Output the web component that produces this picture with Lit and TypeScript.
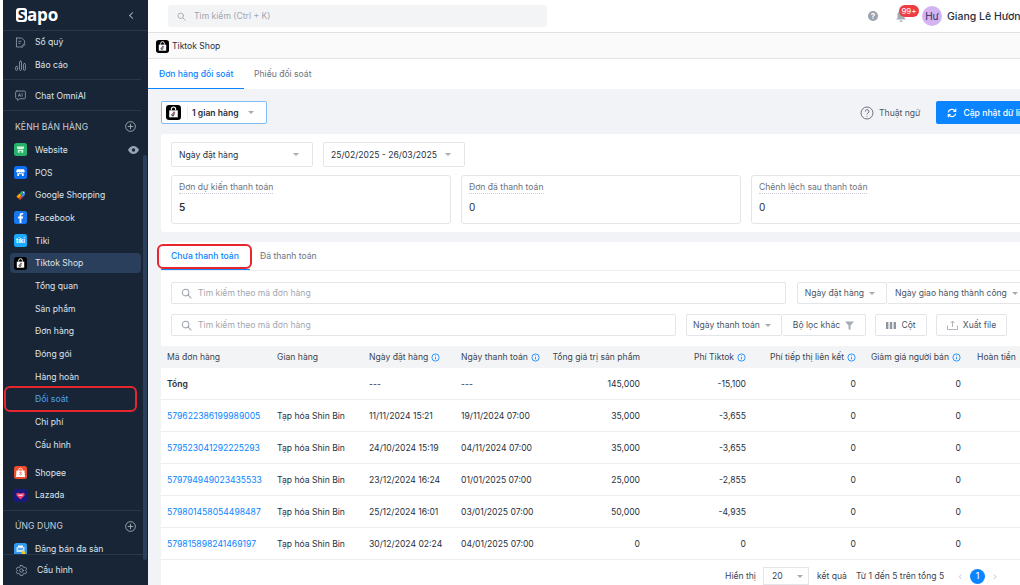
import { LitElement, html, css, svg } from 'lit';
import { customElement } from 'lit/decorators.js';

const bag = (s: number) => html`<svg width=${s} height=${s} viewBox="0 0 14 14">
  <rect width="14" height="14" rx="3" fill="#000"/>
  <path d="M3 5h8v6.500H3z" fill="#fff"/>
  <path d="M5 5V3.800a2 2 0 0 1 4 0V5" fill="none" stroke="#fff" stroke-width="1"/>
  <path d="M7.400 6.200v3a1 1 0 1 1-1-1" fill="none" stroke="#111" stroke-width=".9"/>
  <path d="M7.500 6.400c.2.600.6 1 1.200 1" fill="none" stroke="#e0184d" stroke-width=".6"/>
</svg>`;

const line = (d: any, size = 13) => html`<svg width=${size} height=${size} viewBox="0 0 16 16" fill="none" stroke="currentColor" stroke-width="1.100" stroke-linecap="round" stroke-linejoin="round">${d}</svg>`;

const tile = (bg: string, inner: any) => html`<svg width="13" height="13" viewBox="0 0 13 13"><rect width="13" height="13" rx="2.500" fill=${bg}/>${inner}</svg>`;

const icons: Record<string, any> = {
  fund: line(svg`<path d="M3 2.500h6.500L13 6v3M3 2.500v11h5"/><path d="M6 6.500h2.500M6 9h1.500"/><path d="M10 14l3.500-3.500-1-1L9 13z"/>`),
  chart: line(svg`<rect x="2" y="9" width="2.400" height="5" rx="1.200"/><rect x="6.800" y="2.500" width="2.400" height="11.500" rx="1.200"/><rect x="11.600" y="5.500" width="2.400" height="8.500" rx="1.200"/>`),
  chat: line(svg`<path d="M3.500 2.500h9a1.500 1.500 0 0 1 1.500 1.500v6.500a1.500 1.500 0 0 1-1.500 1.500H7l-2.500 2v-2h-1A1.500 1.500 0 0 1 2 10.500V4a1.500 1.500 0 0 1 1.500-1.500z"/><path d="M5.500 9l1.300-3.500L8 9M6 8h1.600M10 5.500V9" stroke-width=".9"/>`),
  gear: line(svg`<circle cx="8" cy="8" r="2.200"/><path d="M6.600 1.800h2.800l.4 1.700 1.500.9 1.700-.5 1.400 2.400-1.300 1.200v1l1.300 1.200-1.400 2.400-1.700-.5-1.500.9-.4 1.700H6.600l-.4-1.700-1.500-.9-1.700.5-1.400-2.400L2.900 8.500v-1L1.600 6.300 3 3.900l1.700.5 1.500-.9z"/>`),
  website: tile('#27b36a', svg`<path d="M3 3.500h7v1.800l-.6.800H3.600L3 5.300zM3.800 6.800h5.400v3H3.800z" fill="#d6f5e3"/><path d="M5.500 8h2v1.800h-2z" fill="#27b36a"/>`),
  pos: tile('#0b6ff2', svg`<path d="M3 3.200h7l.8 2.400a1.200 1.200 0 0 1-2.200.4 1.300 1.300 0 0 1-2.100 0 1.300 1.300 0 0 1-2.100 0 1.200 1.200 0 0 1-2.200-.4zM3.300 7.200h6.400V10H8V8.200H5V10H3.300z" fill="#fff"/>`),
  google: html`<svg width="13" height="13" viewBox="0 0 13 13"><path d="M2.500 7.500l3-3 2 2-3 3z" fill="#f9ab00"/><path d="M4.500 9.500l3-3 1.500 1.500-3 3z" fill="#ea4335"/><path d="M5.500 4.500L8 2h2l-2.500 4.500z" fill="#34a853"/><path d="M7.500 6.500L10 2l1 1v2.500L9 8z" fill="#4285f4"/><circle cx="9.600" cy="3.400" r=".6" fill="#fff"/></svg>`,
  facebook: tile('#1877f2', svg`<path d="M7.400 12V7.400h1.500l.3-1.800H7.400V4.500c0-.5.200-.9.900-.9h.9V2.100c-.3 0-.8-.1-1.300-.1-1.400 0-2.300.8-2.300 2.300v1.300H4.100v1.800h1.500V12z" fill="#fff"/>`),
  tiki: tile('#1ba8ff', svg`<text x="6.500" y="9" text-anchor="middle" font-family="Inter, sans-serif" font-size="6" font-weight="700" fill="#fff">tiki</text>`),
  tiktok: bag(13),
  shopee: tile('#ee4d2d', svg`<path d="M2.500 4.500h8l.5 6.500H2z" fill="#fff"/><path d="M4.700 4.500V4a1.800 1.800 0 0 1 3.600 0v.5" fill="none" stroke="#fff" stroke-width=".9"/><path d="M7.800 6.400c-1-.7-2.500-.2-1.900.6.500.6 1.900.5 1.500 1.400-.4.700-1.400.5-2 .1" fill="none" stroke="#ee4d2d" stroke-width=".8"/>`),
  lazada: tile('#1a1a7e', svg`<path d="M6.500 10.500L2.500 6.500c-.8-1.400.5-3 2-2.600.8.100 1.400.6 2 .6s1.200-.5 2-.6c1.500-.4 2.800 1.200 2 2.600z" fill="#f5406a"/><path d="M4.300 6.200h4.400" stroke="#fff" stroke-width="1"/>`),
  multi: tile('#2e9bf0', svg`<path d="M2.500 4h8v5h-8z" fill="#bfe3ff"/><path d="M4 2.500h5V4H4z" fill="#fff"/><circle cx="9.500" cy="10" r="2" fill="#f5c518"/><path d="M4 6h5" stroke="#1a6fc4"/>`),
};

const caret = html`<span class="caret"></span>`;
const info = html`<svg class="info" width="9" height="9" viewBox="0 0 10 10" fill="none" stroke="#1a8cff" stroke-width="1"><circle cx="5" cy="5" r="4"/><path d="M5 4.500v2.500M5 2.700v.8"/></svg>`;
const search = (s: number) => html`<svg width=${s} height=${s} viewBox="0 0 12 12" fill="none" stroke="#9aa1ab" stroke-width="1.100" stroke-linecap="round"><circle cx="5" cy="5" r="3.600"/><path d="M7.800 7.800L11 11"/></svg>`;
const plus = html`<svg width="11" height="11" viewBox="0 0 12 12" fill="none" stroke="#b3bac4" stroke-width=".9"><circle cx="6" cy="6" r="5.300"/><path d="M6 3v6M3 6h6"/></svg>`;

type Row = [string, string, string, string, string, string, string, string];
const rows: Row[] = [
  ['579622386199989005', 'Tạp hóa Shin Bin', '11/11/2024 15:21', '19/11/2024 07:00', '35,000', '-3,655', '0', '0'],
  ['579523041292225293', 'Tạp hóa Shin Bin', '24/10/2024 15:19', '04/11/2024 07:00', '35,000', '-3,655', '0', '0'],
  ['579794949023435533', 'Tạp hóa Shin Bin', '23/12/2024 16:24', '01/01/2025 07:00', '25,000', '-2,855', '0', '0'],
  ['579801458054498487', 'Tạp hóa Shin Bin', '25/12/2024 16:01', '03/01/2025 07:00', '50,000', '-4,935', '0', '0'],
  ['579815898241469197', 'Tạp hóa Shin Bin', '30/12/2024 02:24', '04/01/2025 07:00', '0', '0', '0', '0'],
];

@customElement('app-root')
export class AppRoot extends LitElement {
  static styles = css`
    :host {
      display: block;
      width: 1020px;
      height: 585px;
      overflow: hidden;
      font-family: Inter, 'Liberation Sans', sans-serif;
      font-size: 8.6px;
      color: #27303d;
      background: #fff;
    }
    .app { position: relative; display: flex; height: 585px; }

    /* sidebar */
    .side {
      width: 145px;
      margin-left: 3px;
      flex: none;
      background: #182537;
      color: #dfe4ea;
      display: flex;
      flex-direction: column;
      overflow: hidden;
      position: relative;
    }
    .logo {
      height: 30px;
      flex: none;
      display: flex;
      align-items: center;
      justify-content: space-between;
      padding: 0 13px 0 13px;
      border-bottom: 1px solid #2a3749;
    }
    .logo b { font: 700 17px/14px 'Open Sans', sans-serif; color: #fff; display: flex; align-items: center; letter-spacing: -.2px; }
    .logo b i { font-style: normal; font-size: 14px; color: #182537; background: #fff; border-radius: 3px; width: 11px; height: 14px; display: flex; align-items: center; justify-content: center; }
    .chev { width: 4px; height: 4px; border-left: 1px solid #9aa5b3; border-bottom: 1px solid #9aa5b3; transform: rotate(45deg); }
    .nav { flex: 1; overflow: hidden; padding-right: 7px; }
    .item { height: 22.7px; display: flex; align-items: center; gap: 8px; padding-left: 11px; white-space: nowrap; color: #dfe4ea; position: relative; }
    .item .ic { width: 13px; height: 13px; display: flex; flex: none; color: #8d98a7; }
    .sub { padding-left: 32px; }
    .sub.on { color: #4da3ef; }
    .item.sel { background: #2a3f5c; border-radius: 4px; margin-left: 7px; padding-left: 4px; height: 20px; margin-top: 1.35px; margin-bottom: 1.35px; }
    .eye { position: absolute; right: 2px; top: 7px; }
    .rule { height: 1px; background: #2a3749; margin: 3px 0 4px; }
    .head { height: 23.5px; display: flex; align-items: center; justify-content: space-between; padding: 0 5px 0 12px; color: #c9d0d9; letter-spacing: .1px; }
    .gap { height: 5px; }
    .foot { height: 30px; flex: none; border-top: 1px solid #2a3749; display: flex; align-items: center; gap: 9px; padding-left: 12px; background: #182537; color: #dfe4ea; }
    .foot span { display: flex; color: #8d98a7; }
    .scroll { position: absolute; right: 1px; top: 155px; width: 4px; height: 405px; border-radius: 2px; background: #2a3f5c; }

    /* main */
    .main { flex: 1; min-width: 0; overflow: hidden; background: #f2f3f7; display: flex; flex-direction: column; }
    .top { height: 32px; flex: none; background: #fff; border-bottom: 1px solid #dfe1e5; display: flex; align-items: center; padding-left: 20px; }
    .find { width: 379px; height: 22px; border-radius: 3px; background: #f3f4f6; display: flex; align-items: center; gap: 8px; padding-left: 9px; color: #a1a7b0; box-sizing: border-box; }
    .user { margin-left: auto; display: flex; align-items: center; white-space: nowrap; width: 152px; flex: none; font-size: 10.5px; font-weight: 500; color: #27303d; position: relative; }
    .user > * { flex: none; }
    .user .q { width: 10px; height: 10px; border-radius: 50%; background: #9ca3ad; color: #fff; font-size: 8px; font-weight: 700; display: flex; align-items: center; justify-content: center; margin-right: 18px; }
    .user .ava { width: 20px; height: 20px; border-radius: 50%; background: #d3b3f2; color: #2c2f5a; display: flex; align-items: center; justify-content: center; font-size: 10px; font-weight: 400; margin: 0 5px 0 16px; }
    .badge { position: absolute; left: 31px; top: -1px; width: 20px; height: 12px; background: #ee3d42; color: #fff; font-size: 8px; font-weight: 400; line-height: 12px; text-align: center; border-radius: 6px; }
    .crumb { height: 24px; flex: none; background: #fafafa; border-bottom: 1px solid #dfe1e5; display: flex; align-items: center; gap: 3px; padding: 1px 0 0 8px; }
    .tabs { height: 30px; flex: none; background: #fff; display: flex; box-sizing: border-box; }
    .tabs span { display: flex; align-items: center; padding: 0 10px 0 11px; color: #6b7280; border-bottom: 1px solid transparent; }
    .tabs .on { width: 96px; box-sizing: border-box; color: #0a84ff; font-weight: 500; border-bottom: 1px solid #0a84ff; white-space: nowrap; }
    .tabs .off { padding-left: 10px; }

    .body { padding: 12px 0 0 13px; width: 940px; box-sizing: border-box; }
    .bar { display: flex; align-items: center; height: 23px; }
    .shop { width: 106px; height: 23px; box-sizing: border-box; border: 1px solid #7dbcf9; border-radius: 2px; background: #fff; display: flex; align-items: center; padding-left: 4px; font-weight: 600; color: #27303d; white-space: nowrap; }
    .shop .sep { width: 1px; height: 13px; background: #eceef0; margin: 0 4px 0 6px; }
    .shop .caret { margin-left: 9px; }
    .term { margin-left: 593px; display: flex; align-items: center; gap: 5px; color: #4b5563; white-space: nowrap; }
    .primary { margin-left: 16px; width: 100px; flex: none; height: 23px; border-radius: 2px; background: #0a84ff; color: #fff; display: flex; align-items: center; gap: 6px; padding-left: 11px; box-sizing: border-box; white-space: nowrap; font-weight: 500; }

    .filter { margin-top: 10px; background: #fff; border-radius: 3px; padding: 8px 10px 9px; height: 98px; box-sizing: border-box; }
    .row { display: flex; gap: 10px; }
    .pick { width: 142px; height: 25px; box-sizing: border-box; border: 1px solid #e3e5e8; border-radius: 2px; display: flex; align-items: center; justify-content: space-between; padding: 0 13px 0 7px; white-space: nowrap; }
    .stats { margin-top: 8px; }
    .stat { width: 280px; height: 49px; flex: none; box-sizing: border-box; border: 1px solid #e3e5e8; border-radius: 3px; padding: 6px 7px; }
    .stat u { text-decoration: none; border-bottom: 1px dotted #c8ccd2; color: #6b7280; padding-bottom: 1px; }
    .stat b { display: block; margin-top: 9px; font-size: 10px; font-weight: 600; }
    .stat b.thin { font-weight: 400; }

    .sheet { margin-top: 10px; background: #fff; }
    .sub-tabs { height: 28px; display: flex; align-items: center; box-sizing: border-box; }
    .sub-tabs span { color: #6b7280; }
    .sub-tabs .on { width: 89px; height: 28px; box-sizing: border-box; padding-left: 10px; display: flex; align-items: center; color: #0a84ff; font-weight: 500; border-bottom: 1px solid #0a84ff; margin-right: 10px; }
    .tools { padding: 11px 0 10px 10px; display: flex; flex-direction: column; gap: 10px; border-top: 1px solid #eceef0; }
    .tool { display: flex; height: 22px; align-items: stretch; }
    .input { box-sizing: border-box; border: 1px solid #e3e5e8; border-radius: 2px; display: flex; align-items: center; gap: 6px; padding-left: 9px; color: #a1a7b0; }
    .ctl { box-sizing: border-box; border: 1px solid #e3e5e8; border-radius: 2px; display: flex; align-items: center; justify-content: center; gap: 5px; color: #4b5563; white-space: nowrap; }
    .ctl.tight { padding-right: 4px; }
    .ctl + .ctl.join { border-left: 0; }

    .thead, .tr { display: grid; grid-template-columns: 110px 92px 92px 92px 99px 106px 110px 105px 100px; align-items: center; }
    .thead { height: 22px; background: #f3f4f6; color: #3b4451; }
    .tr { height: 30px; padding-top: 1px; border-bottom: 1px solid #eceef0; white-space: nowrap; }
    .tr.total .c:first-child { font-weight: 600; }
    .tr.total .n:first-of-type { font-weight: 500; }
    .c { padding-left: 6px; white-space: nowrap; }
    .n { padding: 0 6px 0 0; text-align: right; display: flex; justify-content: flex-end; align-items: center; gap: 3px; }
    .i { display: flex; align-items: center; gap: 3px; }
    .a { color: #0a84ff; }
    .last { padding-left: 10px; }
    .pager { height: 25px; display: flex; align-items: flex-end; color: #3b4451; white-space: nowrap; padding-left: 564px; }
    .pager > span { height: 18px; line-height: 18px; }
    .size { width: 46px; height: 18px; box-sizing: border-box; border: 1px solid #e3e5e8; display: flex; align-items: center; justify-content: space-between; padding: 0 5px 0 8px; margin: 0 8px 0 7px; }
    .pager > .page { width: 15px; height: 15px; line-height: 15px; margin-bottom: 1.5px; border-radius: 50%; background: #0a84ff; color: #fff; text-align: center; font-weight: 500; }
    .pager .range { margin-left: 9px; }
    .arrow { color: #c9cdd3; margin: 0 8px; font-size: 10px; }
    .arrow.first { margin-left: 14px; }

    .caret { width: 0; height: 0; border: 3px solid transparent; border-top: 3.5px solid #a6abb3; border-bottom: 0; flex: none; }
    .info { flex: none; }

    /* red annotation frames drawn on top of the screenshot */
    .mark { position: absolute; border: 2px solid #e8262e; border-radius: 6px; box-sizing: border-box; pointer-events: none; }
    .mark.nav-frame { left: 4px; top: 386px; width: 133px; height: 26px; }
    .mark.tab-frame { left: 157px; top: 244px; width: 95px; height: 25px; }
  `;

  private item(icon: string, label: string, extra?: unknown) {
    return html`<div class="item"><span class="ic">${icons[icon]}</span>${label}${extra}</div>`;
  }

  render() {
    return html`<div class="app">
      <aside class="side">
        <div class="logo"><b><i>S</i>apo</b><span class="chev"></span></div>
        <div class="nav">
          ${this.item('fund', 'Sổ quỹ')}
          ${this.item('chart', 'Báo cáo')}
          <div class="rule"></div>
          ${this.item('chat', 'Chat OmniAI')}
          <div class="rule"></div>
          <div class="head">KÊNH BÁN HÀNG ${plus}</div>
          ${this.item('website', 'Website', html`<svg class="eye" width="11" height="8" viewBox="0 0 11 8"><path d="M0 4c1.500-2.600 3.400-4 5.500-4S9.500 1.400 11 4c-1.500 2.600-3.400 4-5.500 4S1.500 6.600 0 4z" fill="#9aa5b3"/><circle cx="5.500" cy="4" r="1.700" fill="#182537"/></svg>`)}
          ${this.item('pos', 'POS')}
          ${this.item('google', 'Google Shopping')}
          ${this.item('facebook', 'Facebook')}
          ${this.item('tiki', 'Tiki')}
          <div class="item sel"><span class="ic">${icons.tiktok}</span>Tiktok Shop</div>
          ${['Tổng quan', 'Sản phẩm', 'Đơn hàng', 'Đóng gói', 'Hàng hoàn'].map(s => html`<div class="item sub">${s}</div>`)}
          <div class="item sub on">Đối soát</div>
          <div class="item sub">Chi phí</div>
          <div class="item sub">Cấu hình</div>
          <div class="gap"></div>
          ${this.item('shopee', 'Shopee')}
          ${this.item('lazada', 'Lazada')}
          <div class="rule"></div>
          <div class="head">ỨNG DỤNG ${plus}</div>
          ${this.item('multi', 'Đăng bán đa sàn')}
        </div>
        <div class="foot"><span>${icons.gear}</span>Cấu hình</div>
        <div class="scroll"></div>
      </aside>

      <main class="main">
        <div class="top">
          <div class="find">${search(9)}Tìm kiếm (Ctrl + K)</div>
          <div class="user">
            <span class="q">?</span>
            <svg width="10" height="11" viewBox="0 0 10 11" fill="#a5abb4"><path d="M5 0a3.500 3.500 0 0 1 3.500 3.500V7L10 8.500H0L1.500 7V3.500A3.500 3.500 0 0 1 5 0zM3.500 9.500h3a1.500 1.500 0 0 1-3 0z"/></svg>
            <span class="badge">99+</span>
            <span class="ava">Hư</span><span>Giang Lê Hương</span>
          </div>
        </div>
        <div class="crumb">${bag(13)}Tiktok Shop</div>
        <div class="tabs"><span class="on">Đơn hàng đối soát</span><span class="off">Phiếu đối soát</span></div>

        <div class="body">
          <div class="bar">
            <div class="shop">${bag(15)}<span class="sep"></span>1 gian hàng${caret}</div>
            <div class="term">
              <svg width="14" height="14" viewBox="0 0 14 14" fill="none" stroke="#6b7280" stroke-width="1"><circle cx="7" cy="7" r="6"/><path d="M5.300 5.500a1.800 1.800 0 1 1 2.700 1.500c-.6.400-1 .7-1 1.400M7 9.800v.8"/></svg>
              Thuật ngữ
            </div>
            <div class="primary">
              <svg width="10" height="10" viewBox="0 0 10 10" fill="none" stroke="#fff" stroke-width="1.200"><path d="M1.200 4.300A3.900 3.900 0 0 1 8.200 3M8.800 5.700A3.900 3.900 0 0 1 1.800 7"/><path d="M8.700 .8v2.500H6.300M1.300 9.200V6.700h2.400"/></svg>
              Cập nhật dữ liệu
            </div>
          </div>

          <section class="filter">
            <div class="row">
              <div class="pick">Ngày đặt hàng${caret}</div>
              <div class="pick">25/02/2025 - 26/03/2025${caret}</div>
            </div>
            <div class="row stats">
              <div class="stat"><u>Đơn dự kiến thanh toán</u><b>5</b></div>
              <div class="stat"><u>Đơn đã thanh toán</u><b class="thin">0</b></div>
              <div class="stat"><u>Chênh lệch sau thanh toán</u><b class="thin">0</b></div>
            </div>
          </section>

          <section class="sheet">
            <div class="sub-tabs"><div class="on">Chưa thanh toán</div><span>Đã thanh toán</span></div>
            <div class="tools">
              <div class="tool">
                <div class="input" style="width:615px">${search(11)}Tìm kiếm theo mã đơn hàng</div>
                <div class="ctl tight" style="width:90px;margin-left:11px">Ngày đặt hàng ${caret}</div>
                <div class="ctl join" style="width:140px">Ngày giao hàng thành công ${caret}</div>
              </div>
              <div class="tool">
                <div class="input" style="width:505px">${search(11)}Tìm kiếm theo mã đơn hàng</div>
                <div class="ctl tight" style="width:96px;margin-left:10px">Ngày thanh toán ${caret}</div>
                <div class="ctl join" style="width:84px">Bộ lọc khác
                  <svg width="9" height="9" viewBox="0 0 9 9" fill="#a6abb3"><path d="M0 .5h9L5.500 4.500V9l-2-1V4.500z"/></svg>
                </div>
                <div class="ctl" style="width:52px;margin-left:9px">
                  <svg width="10" height="7" viewBox="0 0 10 7" fill="#8f959e"><rect width="2.400" height="7"/><rect x="3.800" width="2.400" height="7"/><rect x="7.600" width="2.400" height="7"/></svg>
                  Cột
                </div>
                <div class="ctl" style="width:71px;margin-left:9px">
                  <svg width="11" height="10" viewBox="0 0 11 10" fill="none" stroke="#a6abb3" stroke-width=".9"><path d="M.5 5.500v4h10v-4M5.500 7V1M3.500 3l2-2 2 2"/></svg>
                  Xuất file
                </div>
              </div>
            </div>

            <div class="thead">
              <div class="c">Mã đơn hàng</div>
              <div class="c">Gian hàng</div>
              <div class="c i">Ngày đặt hàng ${info}</div>
              <div class="c i">Ngày thanh toán ${info}</div>
              <div class="n">Tổng giá trị sản phẩm</div>
              <div class="n">Phí Tiktok ${info}</div>
              <div class="n">Phí tiếp thị liên kết ${info}</div>
              <div class="n">Giảm giá người bán ${info}</div>
              <div class="c last">Hoàn tiền</div>
            </div>
            <div class="tr total">
              <div class="c">Tổng</div><div class="c"></div>
              <div class="c">---</div><div class="c">---</div>
              <div class="n">145,000</div><div class="n">-15,100</div><div class="n">0</div><div class="n">0</div><div></div>
            </div>
            ${rows.map(r => html`<div class="tr">
              <div class="c a">${r[0]}</div>
              <div class="c">${r[1]}</div>
              <div class="c">${r[2]}</div>
              <div class="c">${r[3]}</div>
              <div class="n">${r[4]}</div><div class="n">${r[5]}</div><div class="n">${r[6]}</div><div class="n">${r[7]}</div><div></div>
            </div>`)}
            <div class="pager">
              <span>Hiển thị</span><div class="size">20 ${caret}</div><span>kết quả</span>
              <span class="range">Từ 1 đến 5 trên tổng 5</span>
              <span class="arrow first">‹</span><span class="page">1</span><span class="arrow">›</span>
            </div>
          </section>
        </div>
      </main>

      <div class="mark nav-frame"></div>
      <div class="mark tab-frame"></div>
    </div>`;
  }
}
